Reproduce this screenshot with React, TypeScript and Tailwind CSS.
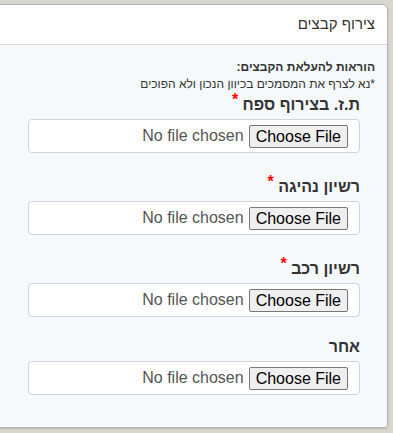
// File attachment card (RTL form)

const fields = [
  { label: "ת.ז. בצירוף ספח", required: true },
  { label: "רשיון נהיגה", required: true },
  { label: "רשיון רכב", required: true },
  { label: "אחר", required: false },
];

function FileBox() {
  return (
    <div className="h-[34px] flex items-center gap-[5px] px-[11px] bg-white border border-[#ced4da] rounded-[4px]">
      <button
        type="button"
        dir="ltr"
        className="h-[23px] px-[6px] text-[16px] leading-[19px] text-black bg-[#efefef] border border-[#767676] rounded-[2px]"
      >
        Choose File
      </button>
      <span dir="ltr" className="text-[16px] text-[#555]">
        No file chosen
      </span>
    </div>
  );
}

export default function App() {
  return (
    <div
      dir="rtl"
      className="min-h-[433px] bg-[#d9d6d0] pt-[4px] text-[#333] overflow-hidden"
      style={{ fontFamily: '"Liberation Sans", Arial, sans-serif' }}
    >
      <div className="mr-[5px] w-[400px] border border-[#b3b3b3] rounded-tr-[6px] rounded-br-[4px] overflow-hidden shadow-[0_1px_2px_rgba(0,0,0,0.15)]">
        <div className="h-[40px] flex items-center px-[12px] bg-white border-b border-[#d9d9d9] text-[15px]">
          צירוף קבצים
        </div>
        <div className="bg-[#f5f9fb] pt-[14px] pb-[32px]">
          <div className="pr-[12px] text-[12px] leading-[17px]">
            <div className="font-bold">הוראות להעלאת הקבצים:</div>
            <div>*נא לצרף את המסמכים בכיוון הנכון ולא הפוכים</div>
          </div>
          <div className="mr-[27px] ml-[39px] flex flex-col">
            {fields.map((f, i) => (
              <div key={f.label} className={i === 0 ? "pt-[1px]" : "mt-[19px]"}>
                <div
                  className={
                    "text-[16px] leading-[22px] font-bold mb-[3px] " +
                    (f.required && i > 0 ? "pt-[4px]" : "")
                  }
                >
                  {f.label}
                  {f.required && (
                    <span className="relative -top-[5px] text-[#ff0000] text-[16px] leading-none">
                      {" "}*
                    </span>
                  )}
                </div>
                <FileBox />
              </div>
            ))}
          </div>
        </div>
      </div>
    </div>
  );
}
